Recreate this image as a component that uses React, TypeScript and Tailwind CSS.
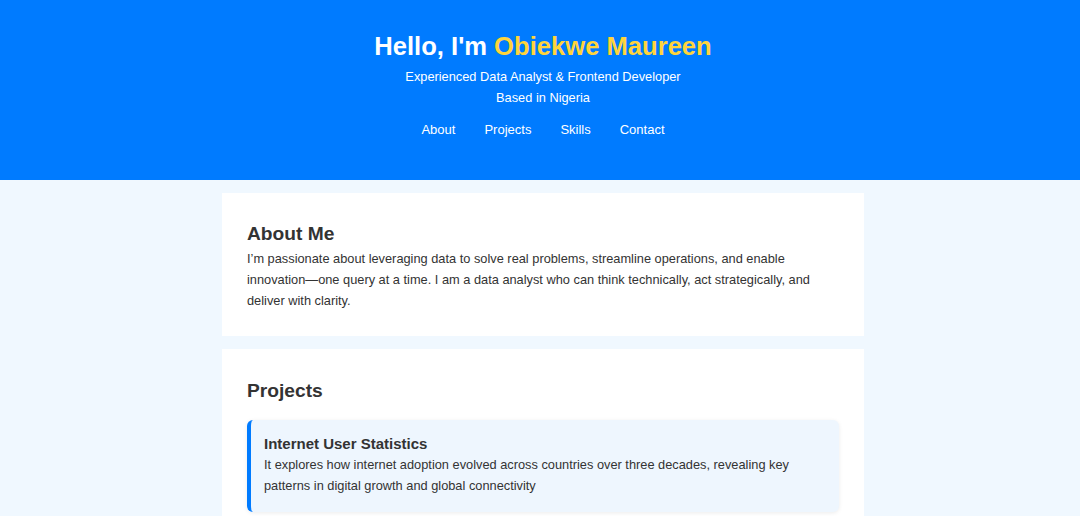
export default function App() {
  return (
    <div className="min-h-screen bg-[#f0f8ff] font-['Liberation_Sans',Arial,sans-serif] text-[#333]">
      {/* Header */}
      <header className="h-[180px] bg-[#007bff] pl-[6px] pt-[30px] text-center text-white">
        <h1 className="text-[25.6px] font-bold leading-[32px]">
          Hello, I'm <span className="text-[#ffd43b]">Obiekwe Maureen</span>
        </h1>
        <p className="mt-[4px] text-[12.8px] leading-[21px]">
          Experienced Data Analyst &amp; Frontend Developer
          <br />
          Based in Nigeria
        </p>
        <nav className="mt-[12px] flex justify-center gap-[29px] text-[13px] leading-[20px]">
          <a href="#about">About</a>
          <a href="#projects">Projects</a>
          <a href="#skills">Skills</a>
          <a href="#contact">Contact</a>
        </nav>
      </header>

      <div className="pl-[6px]">
        <main className="mx-auto flex w-[642px] flex-col gap-[13px] pt-[13px]">
          {/* About */}
          <section id="about" className="bg-white px-[25px] pb-[25px] pt-[29px]">
            <h2 className="text-[19.2px] font-bold leading-[23px]">About Me</h2>
            <p className="mt-[3px] text-[12.8px] leading-[21px]">
              I’m passionate about leveraging data to solve real problems, streamline operations, and enable
              innovation—one query at a time. I am a data analyst who can think technically, act strategically, and
              deliver with clarity.
            </p>
          </section>

          {/* Projects */}
          <section id="projects" className="bg-white px-[25px] pb-[25px] pt-[30px]">
            <h2 className="text-[19.2px] font-bold leading-[23px]">Projects</h2>
            <div className="mt-[18px] rounded-md border-l-4 border-[#007bff] bg-[#eef6fe] pb-[16px] pl-[13px] pr-[20px] pt-[15px] shadow-[0_1px_4px_rgba(0,0,0,0.08)]">
              <h3 className="text-[15px] font-bold leading-[18px]">Internet User Statistics</h3>
              <p className="mt-[1px] text-[12.8px] leading-[21px]">
                It explores how internet adoption evolved across countries over three decades, revealing key
                patterns in digital growth and global connectivity
              </p>
            </div>
          </section>
        </main>
      </div>
    </div>
  )
}
